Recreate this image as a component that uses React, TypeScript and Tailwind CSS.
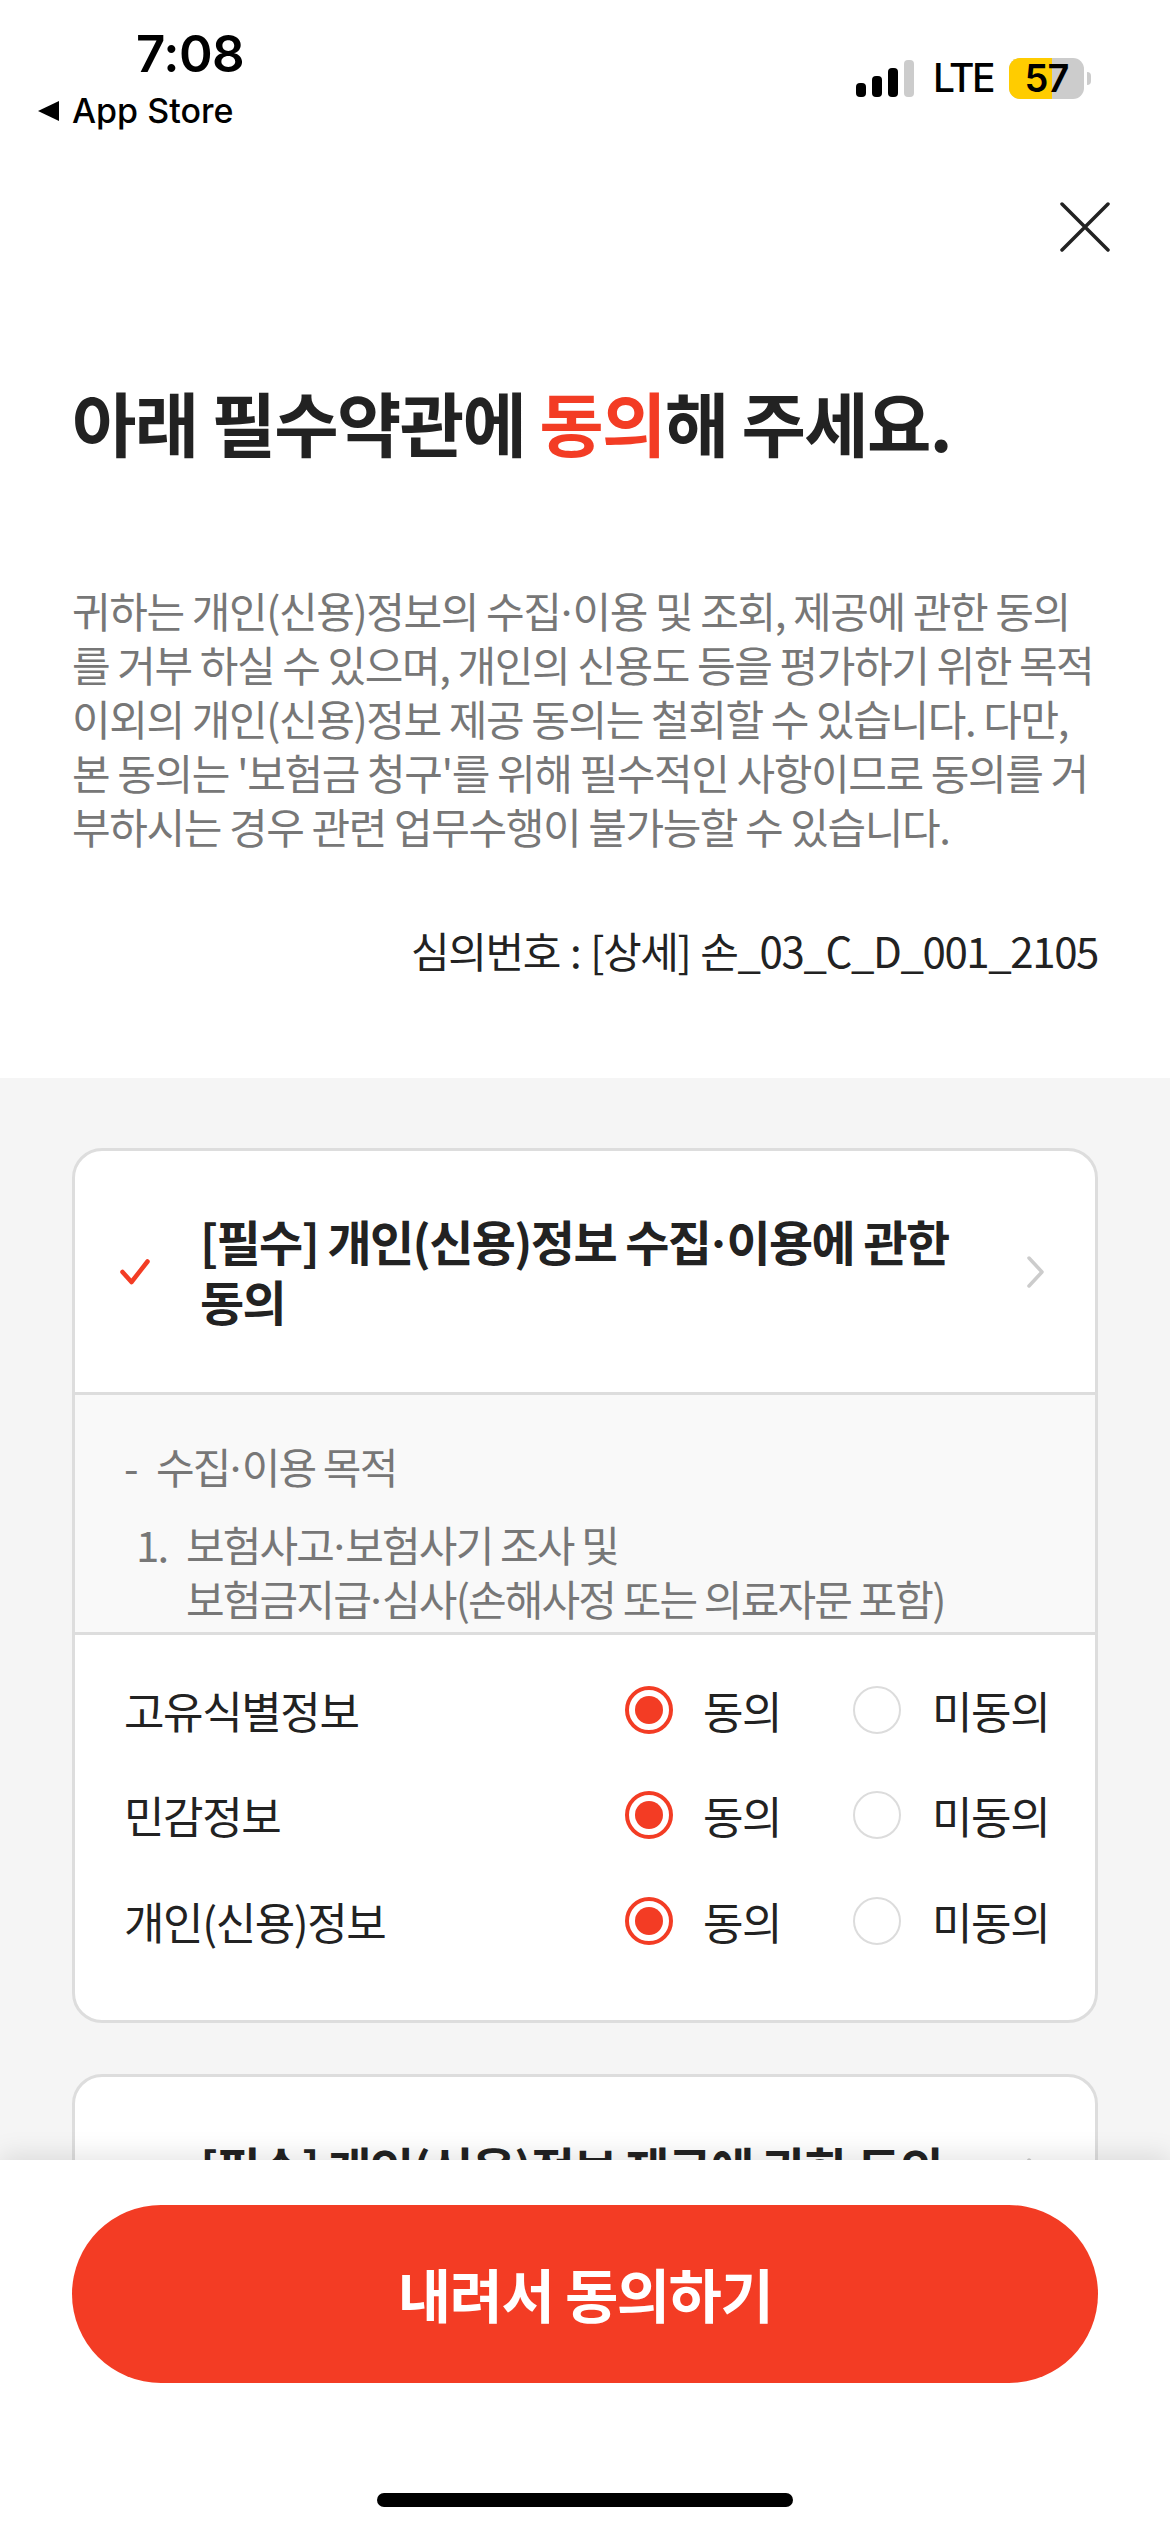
import React from "react";

const F = { fontFamily: '"Noto Sans CJK KR", "Noto Sans", sans-serif' };

function D() {
  return <span className="font-[Inter] leading-none tracking-normal">·</span>;
}

function Radio({ on }: { on: boolean }) {
  return on ? (
    <span className="flex h-[48px] w-[48px] shrink-0 items-center justify-center rounded-full border-[4px] border-[#f33c24] bg-white">
      <span className="h-[28px] w-[28px] rounded-full bg-[#f33c24]" />
    </span>
  ) : (
    <span className="h-[48px] w-[48px] shrink-0 rounded-full border-[2px] border-[#dcdcdc] bg-white" />
  );
}

function Row({ label }: { label: string }) {
  return (
    <div className="flex h-[105.5px] items-center text-[44px] tracking-[-1.4px] text-[#222222]">
      <span className="flex-1">{label}</span>
      <Radio on />
      <span className="ml-[30px] w-[150px]">동의</span>
      <Radio on={false} />
      <span className="ml-[31px] w-[114px] whitespace-nowrap">미동의</span>
    </div>
  );
}

function Chevron({ className = "" }: { className?: string }) {
  return (
    <svg width="20" height="32" viewBox="0 0 20 32" fill="none" className={`shrink-0 ${className}`}>
      <path d="M3 2 L16 16 L3 30" stroke="#cccccc" strokeWidth="3.5" strokeLinecap="round" strokeLinejoin="round" />
    </svg>
  );
}

function Check({ className = "" }: { className?: string }) {
  return (
    <svg width="30" height="26" viewBox="0 0 30 26" fill="none" className={`shrink-0 ${className}`}>
      <path d="M2.5 13 L11.5 23 L27.5 2.5" stroke="#f33c24" strokeWidth="4.5" strokeLinecap="round" strokeLinejoin="round" />
    </svg>
  );
}

function StatusBar() {
  return (
    <div className="relative h-[164px] shrink-0" style={{ fontFamily: 'Inter, "Liberation Sans", sans-serif' }}>
      <div className="flex justify-between">
        <div className="pl-[37px]">
          <div className="pl-[99px] pt-[26px] text-[51px] leading-[56px] font-semibold tracking-[-0.5px] text-black">7:08</div>
          <div className="mt-[7px] flex items-center gap-[12px] text-[34px] leading-[44px] font-medium text-black">
            <svg width="23" height="20" viewBox="0 0 23 20"><path d="M22 0 V20 L1 10 Z" fill="#000" /></svg>
            App Store
          </div>
        </div>
        <div className="flex h-[108px] items-center pt-[48px] pr-[79px]">
          <div className="flex items-end gap-[6px]">
            <span className="h-[14px] w-[10px] rounded-[4px] bg-black" />
            <span className="h-[21px] w-[10px] rounded-[4px] bg-black" />
            <span className="h-[29px] w-[10px] rounded-[4px] bg-black" />
            <span className="h-[37px] w-[10px] rounded-[4px] bg-[#cccccc]" />
          </div>
          <span className="ml-[19px] w-[62px] text-[39px] leading-[40px] font-medium tracking-[-2.4px] whitespace-nowrap text-black">LTE</span>
          <div className="relative ml-[14px] flex h-[41px] w-[75px] items-center justify-center overflow-hidden rounded-[11px] bg-[#cccccc]">
            <span className="absolute inset-y-0 left-0 w-[43px] bg-[#ffcc00]" />
            <span className="relative text-[38px] leading-[40px] font-semibold tracking-[-1px] text-black">57</span>
          </div>
          <span className="ml-[3px] h-[13px] w-[4px] rounded-r-full bg-[#cccccc]" />
        </div>
      </div>
    </div>
  );
}

export default function App() {
  return (
    <div className="flex h-[2532px] w-[1170px] flex-col overflow-hidden bg-white" style={F}>
      <StatusBar />
      <div className="flex min-h-0 flex-1 flex-col overflow-hidden">
        <div className="shrink-0 px-[72px]">
          <div className="flex justify-end">
            <svg width="50" height="50" viewBox="0 0 50 50" fill="none" className="mt-[38px] mr-[-12px]">
              <path d="M2 2 L48 48 M48 2 L2 48" stroke="#222222" strokeWidth="3.5" strokeLinecap="round" />
            </svg>
          </div>
          <h1 className="mt-[128px] text-[70px] leading-[84px] font-bold tracking-[-1.7px] text-[#222222]">
            아래 필수약관에 <span className="text-[#f33c24]">동의</span>해 주세요.
          </h1>
          <p className="mt-[119px] text-[42px] leading-[54px] tracking-[-1.4px] text-[#777777]">
            귀하는 개인(신용)정보의 수집<D />이용 및 조회, 제공에 관한 동의를 거부 하실 수 있으며, 개인의 신용도 등을 평가하기 위한 목적 이외의 개인(신용)정보 제공 동의는 철회할 수 있습니다. 다만, 본 동의는 '보험금 청구'를 위해 필수적인 사항이므로 동의를 거부하시는 경우 관련 업무수행이 불가능할 수 있습니다.
          </p>
          <p className="mt-[70px] text-right text-[42px] leading-[54px] tracking-[-1.4px] [word-spacing:2px] text-[#222222]">
            심의번호 : [상세] 손_03_C_D_001_2105
          </p>
        </div>
        <div className="mt-[101px] flex min-h-0 flex-1 flex-col gap-[51px] bg-[#f5f5f5] px-[72px] pt-[70px]">
          <div className="shrink-0 overflow-hidden rounded-[30px] border-[3px] border-[#dddddd] bg-white">
            <div className="flex h-[241px] items-center pr-[49px] pl-[45px]">
              <Check />
              <div className="ml-[50px] flex-1 pr-[50px] pb-[4px] text-[48px] leading-[60px] font-bold tracking-[-1.6px] text-[#222222]">
                [필수] 개인(신용)정보 수집<D />이용에 관한 동의
              </div>
              <Chevron />
            </div>
            <div className="h-[243px] border-y-[3px] border-[#dddddd] bg-[#f9f9f9] pt-[44px] pr-[30px] pl-[49px] text-[42px] leading-[54px] tracking-[-1.85px] text-[#777777]">
              <div className="flex">
                <span className="w-[32px]">-</span>
                <span>
                  수집<D />이용 목적
                </span>
              </div>
              <div className="mt-[24px] flex pl-[12px]">
                <span className="w-[50px]">1.</span>
                <span>
                  보험사고<D />보험사기 조사 및<br />보험금지급<D />심사(손해사정 또는 의료자문 포함)
                </span>
              </div>
            </div>
            <div className="px-[49px] pt-[22px] pb-[46px]">
              <Row label="고유식별정보" />
              <Row label="민감정보" />
              <Row label="개인(신용)정보" />
            </div>
          </div>
          <div className="shrink-0 overflow-hidden rounded-[30px] border-[3px] border-[#dddddd] bg-white">
            <div className="flex h-[184px] items-center pr-[49px] pl-[45px]">
              <Check className="mt-[8px]" />
              <div className="ml-[50px] flex-1 pr-[50px] pb-[4px] text-[48px] leading-[60px] font-bold tracking-[-1.6px] text-[#222222]">
                [필수] 개인(신용)정보 제공에 관한 동의
              </div>
              <Chevron className="mt-[10px]" />
            </div>
          </div>
        </div>
      </div>
      <div className="relative h-[372px] shrink-0 bg-white px-[72px] pt-[45px] shadow-[0_-6px_24px_rgba(0,0,0,0.10)]">
        <div className="flex h-[178px] items-center justify-center rounded-full bg-[#f33c24] pb-[2px] text-[58px] font-bold tracking-[-1.5px] text-white">
          내려서 동의하기
        </div>
        <div className="mx-auto mt-[110px] h-[14px] w-[416px] rounded-full bg-black" />
      </div>
    </div>
  );
}
